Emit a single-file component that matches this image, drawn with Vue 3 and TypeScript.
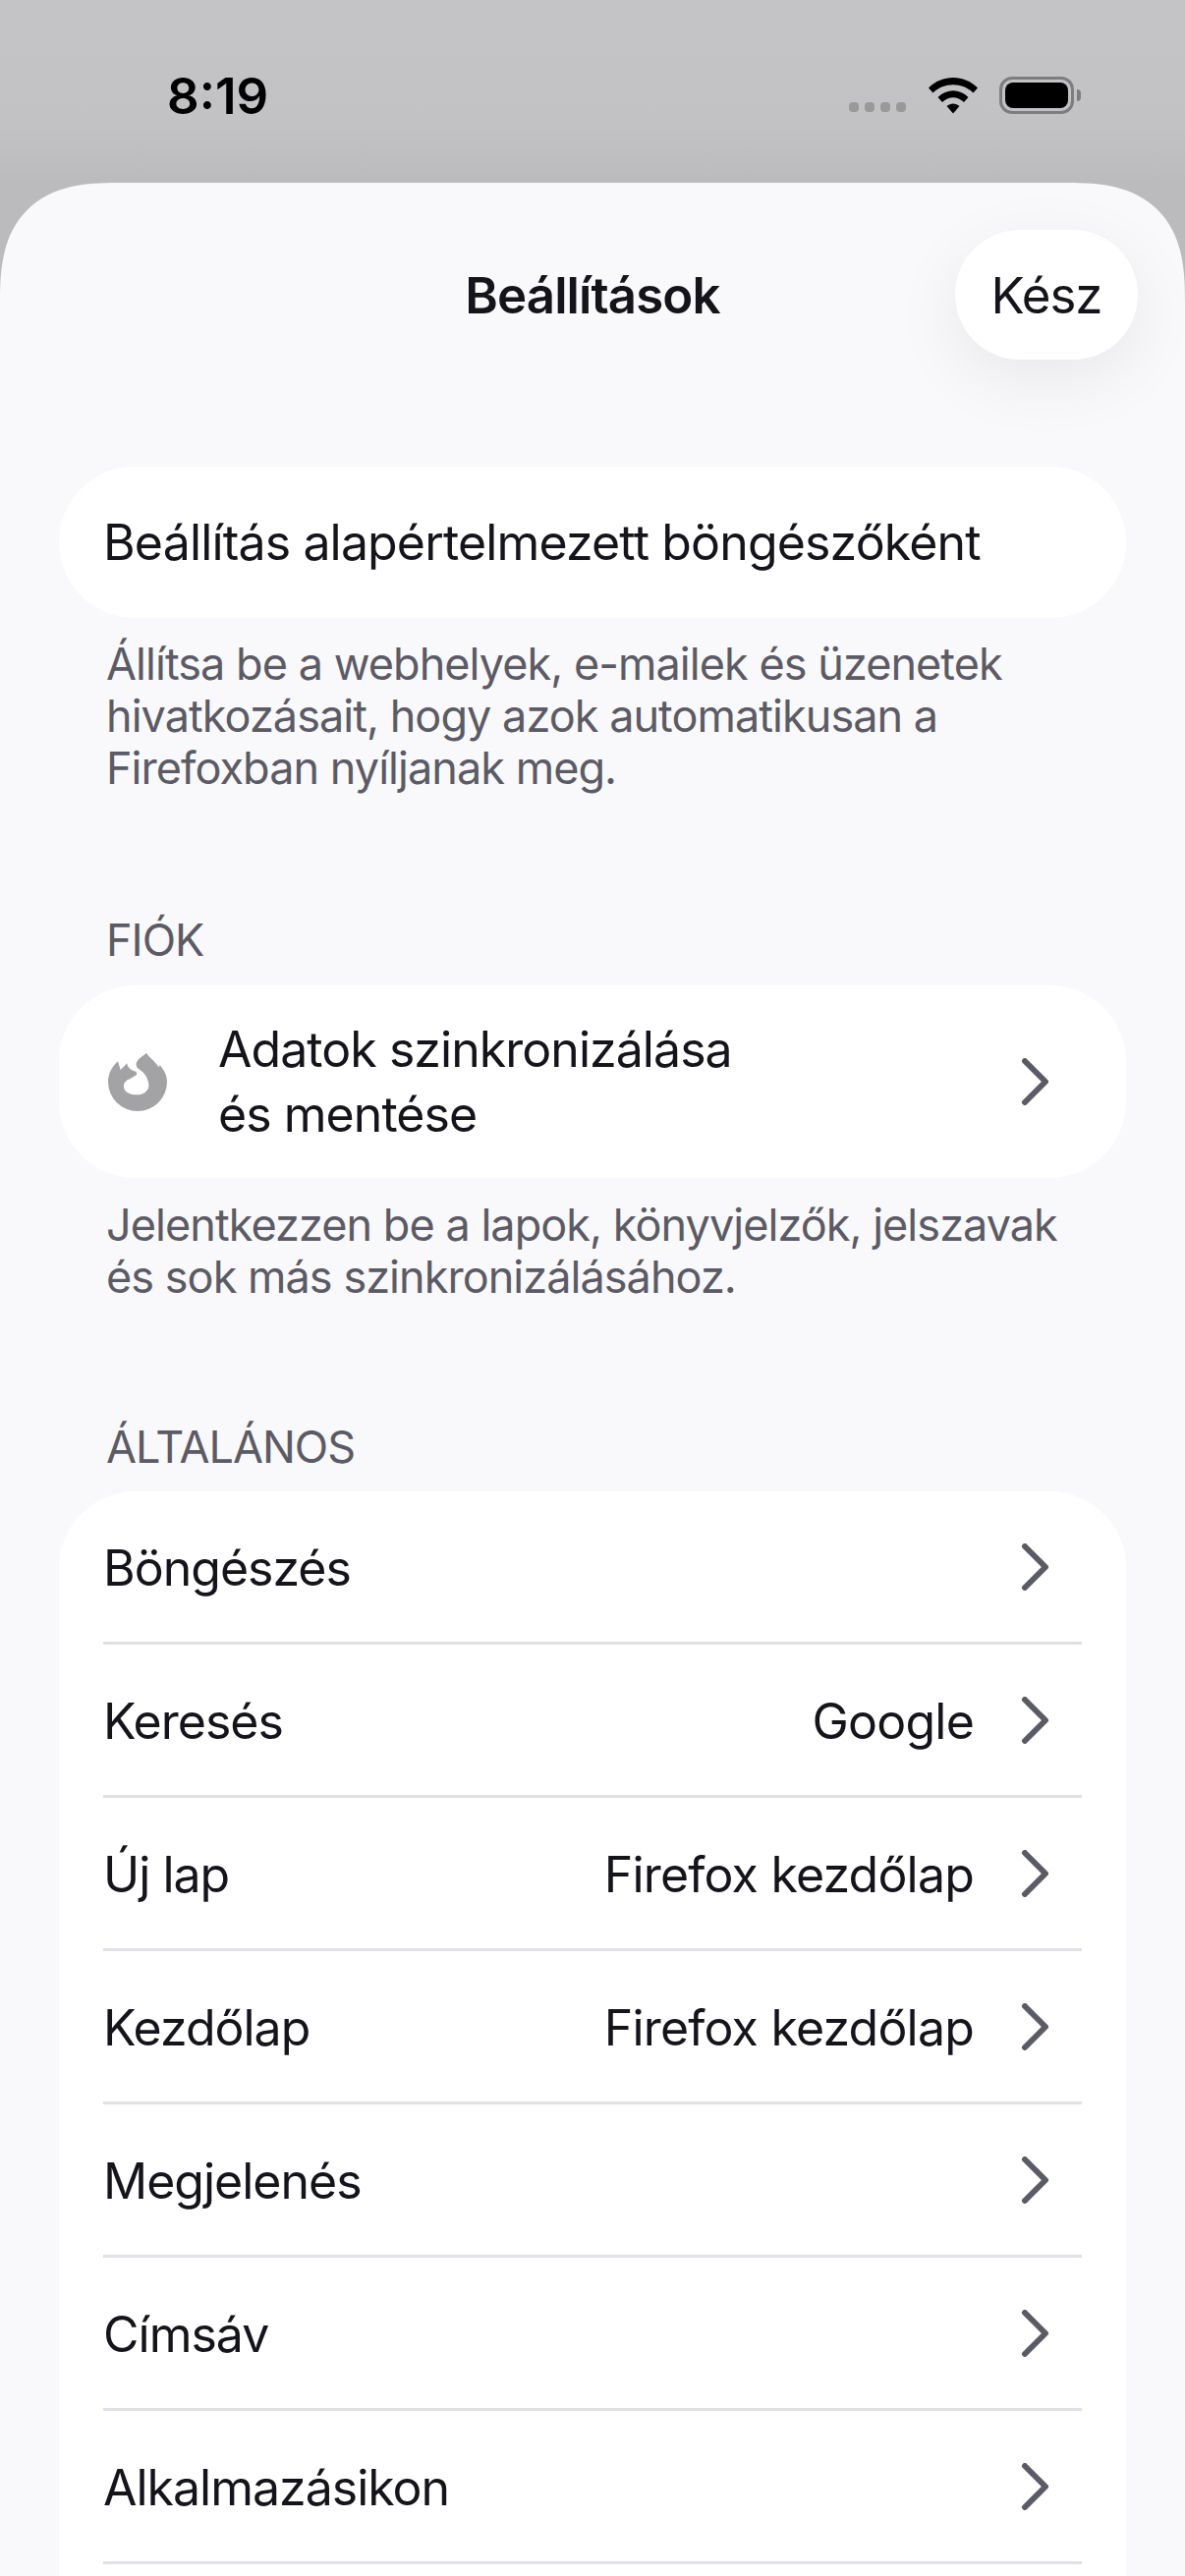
<script setup lang="ts">
const generalRows = [
  { label: 'Böngészés' },
  { label: 'Keresés', value: 'Google' },
  { label: 'Új lap', value: 'Firefox kezdőlap' },
  { label: 'Kezdőlap', value: 'Firefox kezdőlap' },
  { label: 'Megjelenés' },
  { label: 'Címsáv' },
  { label: 'Alkalmazásikon' },
]
</script>

<template>
  <div class="screen">
    <header class="status-bar">
      <span class="time">8:19</span>
      <div class="status-icons">
        <div class="signal"><i /><i /><i /><i /></div>
        <svg class="wifi" width="50" height="38" viewBox="0 0 50 38">
          <path d="M0 11.5C13.5-2.5 36.500-2.500 50 11.500L45.500 16.500C34.500 5.500 15.500 5.500 4.500 16.500Z" />
          <path d="M9.500 21C18.500 12 31.500 12 40.500 21L36 26C29.500 19.500 20.500 19.500 14 26Z" />
          <path d="M18.500 30C22.500 26.500 27.500 26.500 31.500 30L25 37.500Z" />
        </svg>
        <div class="battery"><div class="battery-fill" /></div>
        <div class="battery-tip" />
      </div>
    </header>

    <main class="sheet">
      <div class="nav">
        <h1 class="nav-title">Beállítások</h1>
        <button class="done">Kész</button>
      </div>

      <section class="card single">
        <div class="row-text">Beállítás alapértelmezett böngészőként</div>
      </section>
      <p class="note first-note">
        Állítsa be a webhelyek, e-mailek és üzenetek<br />hivatkozásait, hogy azok automatikusan a<br />Firefoxban nyíljanak meg.
      </p>

      <h2 class="heading account-heading">FIÓK</h2>
      <section class="card sync">
        <svg class="fx" width="60" height="60" viewBox="0 0 180 180">
          <path
            d="M117 2C125 16 145 28 154 46L158 40C172 56 180 72 180 90A90 90 0 0 1 0 90C0 68 10 46 30 28L38 54L58 34C60 48 70 56 86 60L88 68L67 82C58 84 48 92 48 104C48 122 68 130 88 130C112 130 126 114 124 98C123 88 118 68 100 56C92 50 84 46 86 34C90 20 106 12 117 2Z"
          />
        </svg>
        <div class="sync-label">Adatok szinkronizálása<br />és mentése</div>
        <svg class="chevron" width="30" height="48" viewBox="0 0 30 48"><path d="M4 3L25 24L4 45" /></svg>
      </section>
      <p class="note">
        Jelentkezzen be a lapok, könyvjelzők, jelszavak<br />és sok más szinkronizálásához.
      </p>

      <h2 class="heading general-heading">ÁLTALÁNOS</h2>
      <section class="card general">
        <div v-for="row of generalRows" :key="row.label" class="row">
          <span class="row-text">{{ row.label }}</span>
          <span v-if="row.value" class="row-value">{{ row.value }}</span>
          <svg class="chevron" width="30" height="48" viewBox="0 0 30 48"><path d="M4 3L25 24L4 45" /></svg>
        </div>
      </section>
    </main>
  </div>
</template>

<style>
html,
body {
  margin: 0;
  background: #bdbdbf;
}
</style>

<style scoped>
.screen {
  width: 1206px;
  height: 2622px;
  overflow: hidden;
  background: linear-gradient(#c4c4c6, #c2c2c4 130px, #bbbbbd 186px);
  font-family: Inter, "Noto Sans", sans-serif;
  color: #15141a;
}

.status-bar {
  height: 186px;
  box-sizing: border-box;
  padding: 0 106px 0 170px;
  display: flex;
  justify-content: space-between;
  align-items: flex-start;
}

.time {
  margin-top: 66px;
  font-size: 51px;
  line-height: 64px;
  font-weight: 600;
  color: #000;
}

.status-icons {
  margin-top: 78px;
  display: flex;
  align-items: center;
}

.signal {
  display: flex;
  gap: 6px;
  margin: 24px 23px 0 0;
}

.signal i {
  width: 10px;
  height: 10px;
  border-radius: 4px;
  background: #999;
}

.wifi {
  fill: #000;
  margin-right: 22px;
}

.battery {
  width: 76px;
  height: 38px;
  box-sizing: border-box;
  border: 3px solid #7d7d7f;
  border-radius: 13px;
  padding: 3px;
}

.battery-fill {
  height: 100%;
  background: #000;
  border-radius: 8px;
}

.battery-tip {
  width: 4px;
  height: 12px;
  margin-left: 3px;
  background: #7d7d7f;
  border-radius: 0 4px 4px 0;
}

.sheet {
  background: #f9f9fb;
  border-radius: 120px 120px 0 0;
  corner-shape: superellipse(1.4);
  padding: 48px 60px 0;
  height: 2436px;
  box-sizing: border-box;
}

.nav {
  position: relative;
  height: 132px;
  display: flex;
  align-items: center;
  justify-content: center;
}

.nav-title {
  margin: 0;
  font-size: 51px;
  font-weight: 600;
  letter-spacing: -0.9px;
}

.done {
  position: absolute;
  right: -12px;
  top: 0;
  width: 186px;
  height: 132px;
  border: 0;
  border-radius: 66px;
  background: #fff;
  box-shadow: 0 20px 70px rgba(0, 0, 0, 0.07);
  font: inherit;
  font-size: 51px;
  letter-spacing: -1px;
  color: inherit;
}

.card {
  background: #fff;
  border-radius: 78px;
}

.single {
  margin-top: 109px;
  height: 154px;
  padding: 0 45px;
  display: flex;
  align-items: center;
}

.row-text {
  font-size: 50px;
  letter-spacing: -0.85px;
}

.note {
  margin: 0;
  padding: 0 48px;
  font-size: 45px;
  line-height: 53px;
  letter-spacing: -0.95px;
  color: #5b5b66;
  white-space: nowrap;
}

.first-note {
  margin-top: 20px;
}

.note:not(.first-note) {
  margin-top: 21px;
}

.heading {
  margin: 0;
  padding: 0 48px;
  font-size: 45px;
  line-height: 54px;
  font-weight: 400;
  letter-spacing: -1px;
  color: #5b5b66;
}

.account-heading {
  margin-top: 122px;
}

.general-heading {
  margin-top: 120px;
}

.sync {
  margin-top: 19px;
  height: 196px;
  padding: 0 77px 0 50px;
  display: flex;
  align-items: center;
}

.fx {
  fill: #a3a3a5;
  margin-right: 52px;
  flex: none;
}

.sync-label {
  flex: 1;
  font-size: 50px;
  letter-spacing: -0.95px;
  line-height: 66px;
}

.chevron {
  flex: none;
  fill: none;
  stroke: #5b5b66;
  stroke-width: 6;
  stroke-linecap: round;
  stroke-linejoin: round;
}

.general {
  margin-top: 18px;
  padding: 0 45px 200px;
}

.row {
  height: 156px;
  box-sizing: border-box;
  display: flex;
  align-items: center;
  border-bottom: 3px solid #e0e0e6;
  padding-right: 32px;
}

.row .row-text {
  flex: 1;
  padding-top: 2px;
  letter-spacing: -1px;
}

.row-value {
  font-size: 50px;
  letter-spacing: -0.8px;
  padding-top: 2px;
  margin-right: 48px;
}
</style>
